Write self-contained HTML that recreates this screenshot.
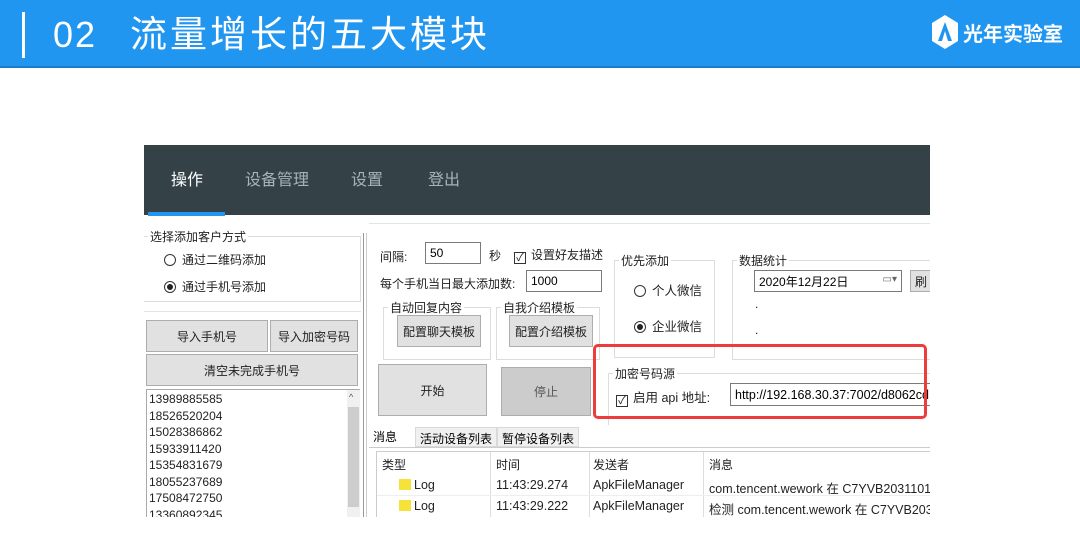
<!DOCTYPE html>
<html><head><meta charset="utf-8"><style>
*{margin:0;padding:0;box-sizing:border-box}
body{width:1080px;height:557px;background:#fff;position:relative;overflow:hidden;font-family:"Liberation Sans","Noto Sans CJK SC",sans-serif}
.a{position:absolute}
.t{font-size:12px;color:#222;white-space:nowrap}
.btn{position:absolute;background:#e1e1e1;border:1px solid #adadad;font-size:12px;color:#222;display:flex;align-items:center;justify-content:center;white-space:nowrap}
.grp{position:absolute;border:1px solid #dcdcdc}
.lg{position:absolute;top:-9px;left:8px;background:#fff;padding:0 2px;font-size:12px;color:#222;white-space:nowrap}
.inp{position:absolute;background:#fff;border:1px solid #7a7a7a;font-size:12px;padding-left:4px;display:flex;align-items:center;white-space:nowrap;overflow:hidden}
.rad{display:inline-block;width:12px;height:12px;border:1px solid #333;border-radius:50%;vertical-align:-2px;margin-right:6px;position:relative}
.rad.on:after{content:"";position:absolute;left:2px;top:2px;width:6px;height:6px;border-radius:50%;background:#222}
.chk{display:inline-block;width:12px;height:12px;border:1px solid #333;vertical-align:-2px;margin-right:5px;font-size:11px;line-height:10px;text-align:center}
</style></head><body>
<div class="a" style="left:0;top:0;width:1080px;height:68px;background:#2196f0;border-bottom:2px solid #1a7ccc"></div>
<div class="a" style="left:22px;top:12px;width:3px;height:46px;background:#fff"></div>
<div class="a" style="left:53px;top:13px;color:#fff;font-size:36px;line-height:44px;white-space:nowrap;letter-spacing:2px">02</div>
<div class="a" style="left:130px;top:12px;color:#fff;font-size:37px;line-height:46px;letter-spacing:3px;white-space:nowrap">流量增长的五大模块</div>
<svg class="a" style="left:930px;top:14px" width="30" height="36" viewBox="0 0 30 36"><path d="M15 1 L28 9 L28 27 L15 35 L2 27 L2 9Z" fill="#fff"/><path d="M15 8 L8 27 L12 27 L15 17 L18 27 L22 27Z" fill="#2196f0"/></svg>
<div class="a" style="left:963px;top:18px;color:#fff;font-size:20px;font-weight:bold">光年实验室</div>

<div class="a" style="left:144px;top:145px;width:786px;height:372px;background:#fff;overflow:hidden">
 <div class="a" style="left:0;top:0;width:786px;height:70px;background:#344248"></div>
 <div class="a" style="left:4px;top:67px;width:77px;height:4px;background:#2196f0"></div>
 <div class="a" style="left:27px;top:21px;color:#fff;font-size:16px">操作</div>
 <div class="a" style="left:101px;top:21px;color:#a9b2b6;font-size:16px">设备管理</div>
 <div class="a" style="left:207px;top:21px;color:#a9b2b6;font-size:16px">设置</div>
 <div class="a" style="left:284px;top:21px;color:#a9b2b6;font-size:16px">登出</div>
 <div class="grp" style="left:0;top:91px;width:217px;height:66px;border-left:none"><span class="lg" style="left:4px">选择添加客户方式</span></div>
 <div class="a t" style="left:20px;top:106px"><span class="rad"></span>通过二维码添加</div>
 <div class="a t" style="left:20px;top:133px"><span class="rad on"></span>通过手机号添加</div>
 <div class="a" style="left:0;top:166px;width:217px;height:1px;background:#e4e4e4"></div>
 <div class="btn" style="left:2px;top:175px;width:122px;height:32px">导入手机号</div>
 <div class="btn" style="left:126px;top:175px;width:88px;height:32px">导入加密号码</div>
 <div class="btn" style="left:2px;top:209px;width:212px;height:32px">清空未完成手机号</div>
 <div class="a" style="left:2px;top:244px;width:214px;height:130px;border:1px solid #aaa;background:#fff"></div>
 <div class="a" style="left:203px;top:245px;width:13px;height:128px;background:#f0f0f0"></div>
 <div class="a" style="left:204px;top:262px;width:11px;height:100px;background:#cdcdcd"></div>
 <div class="a" style="left:205px;top:247px;font-size:9px;color:#555">^</div>
 <div class="a" style="left:5px;top:246px;font-size:12px;line-height:16.5px;color:#222">13989885585<br>18526520204<br>15028386862<br>15933911420<br>15354831679<br>18055237689<br>17508472750<br>13360892345</div>
 <div class="a" style="left:219px;top:88px;width:4px;height:290px;border-left:1px solid #999;border-right:1px solid #ccc"></div>
 <div class="a" style="left:225px;top:78px;width:561px;height:1px;background:#e4e4e4"></div>
 <div class="a t" style="left:236px;top:103px">间隔:</div>
 <div class="inp" style="left:281px;top:97px;width:56px;height:22px">50</div>
 <div class="a t" style="left:345px;top:102px">秒</div>
 <div class="a t" style="left:370px;top:101px"><span class="chk">✓</span>设置好友描述</div>
 <div class="a t" style="left:236px;top:130px">每个手机当日最大添加数:</div>
 <div class="inp" style="left:382px;top:125px;width:76px;height:22px">1000</div>
 <div class="grp" style="left:239px;top:162px;width:108px;height:53px"><span class="lg" style="left:4px">自动回复内容</span></div>
 <div class="btn" style="left:253px;top:170px;width:84px;height:32px">配置聊天模板</div>
 <div class="grp" style="left:352px;top:162px;width:104px;height:53px"><span class="lg" style="left:4px">自我介绍模板</span></div>
 <div class="btn" style="left:365px;top:170px;width:84px;height:32px">配置介绍模板</div>
 <div class="grp" style="left:470px;top:115px;width:101px;height:98px"><span class="lg" style="left:4px">优先添加</span></div>
 <div class="a t" style="left:490px;top:135px;font-size:12.5px"><span class="rad"></span>个人微信</div>
 <div class="a t" style="left:490px;top:171px;font-size:12.5px"><span class="rad on"></span>企业微信</div>
 <div class="grp" style="left:588px;top:115px;width:210px;height:100px"><span class="lg" style="left:4px">数据统计</span></div>
 <div class="inp" style="left:610px;top:125px;width:148px;height:22px">2020年12月22日<span style="position:absolute;right:4px;top:3px;font-size:10px;color:#666">▭▾</span></div>
 <div class="btn" style="left:766px;top:125px;width:30px;height:22px;justify-content:flex-start;padding-left:4px">刷</div>
 <div class="a t" style="left:611px;top:152px">.</div>
 <div class="a t" style="left:611px;top:178px">.</div>
 <div class="btn" style="left:234px;top:219px;width:109px;height:52px">开始</div>
 <div class="btn" style="left:357px;top:222px;width:90px;height:49px;background:#ccc;color:#555">停止</div>
 <div class="grp" style="left:464px;top:228px;width:330px;height:52px;border-bottom:none"><span class="lg" style="left:4px">加密号码源</span></div>
 <div class="a t" style="left:472px;top:242px;font-size:12.5px"><span class="chk">✓</span>启用 api 地址:</div>
 <div class="inp" style="left:586px;top:238px;width:210px;height:23px;font-size:12.5px">http://192.168.30.37:7002/d8062cd</div>
 <div class="a" style="left:449px;top:199px;width:334px;height:75px;border:3px solid #ee3b3b;border-radius:5px"></div>
 <div class="a" style="left:225px;top:280px;width:46px;height:22px;background:#fff;font-size:12px;padding:3px 4px">消息</div>
 <div class="a" style="left:271px;top:282px;width:82px;height:20px;background:#f0f0f0;border:1px solid #d9d9d9;font-size:12px;padding:2px 4px;white-space:nowrap">活动设备列表</div>
 <div class="a" style="left:353px;top:282px;width:82px;height:20px;background:#f0f0f0;border:1px solid #d9d9d9;font-size:12px;padding:2px 4px;white-space:nowrap">暂停设备列表</div>
 <div class="a" style="left:225px;top:302px;width:561px;height:1px;background:#ccc"></div>
 <div class="a" style="left:232px;top:306px;width:554px;height:70px;border:1px solid #ccc;border-right:none"></div>
 <div class="a" style="left:346px;top:307px;width:1px;height:70px;background:#ddd"></div>
 <div class="a" style="left:445px;top:307px;width:1px;height:70px;background:#ddd"></div>
 <div class="a" style="left:559px;top:307px;width:1px;height:70px;background:#ddd"></div>
 <div class="a" style="left:233px;top:350px;width:553px;height:1px;background:#eee"></div>
 <div class="a t" style="left:238px;top:311px">类型</div>
 <div class="a t" style="left:352px;top:311px">时间</div>
 <div class="a t" style="left:449px;top:311px">发送者</div>
 <div class="a t" style="left:565px;top:311px">消息</div>
 <div class="a" style="left:255px;top:334px;width:12px;height:11px;background:#f5e33a"></div>
 <div class="a t" style="left:270px;top:333px;font-size:12.5px">Log</div>
 <div class="a t" style="left:352px;top:333px;font-size:12.5px">11:43:29.274</div>
 <div class="a t" style="left:449px;top:333px;font-size:12.5px">ApkFileManager</div>
 <div class="a t" style="left:565px;top:333px;font-size:12.5px">com.tencent.wework 在 C7YVB20311014</div>
 <div class="a" style="left:255px;top:355px;width:12px;height:11px;background:#f5e33a"></div>
 <div class="a t" style="left:270px;top:354px;font-size:12.5px">Log</div>
 <div class="a t" style="left:352px;top:354px;font-size:12.5px">11:43:29.222</div>
 <div class="a t" style="left:449px;top:354px;font-size:12.5px">ApkFileManager</div>
 <div class="a t" style="left:565px;top:354px;font-size:12.5px">检测 com.tencent.wework 在 C7YVB2031</div>
</div>
</body></html>
